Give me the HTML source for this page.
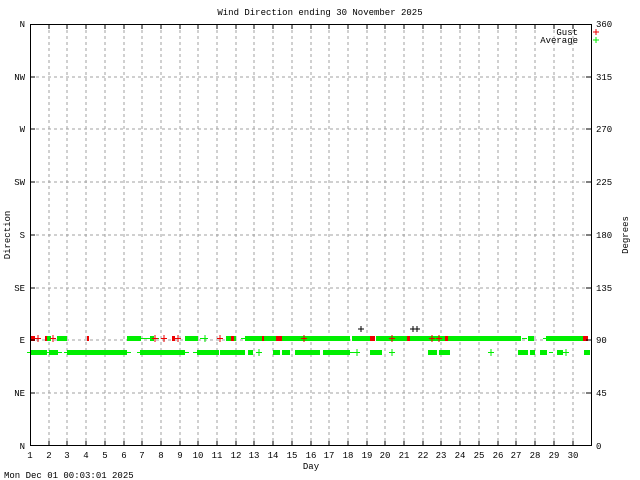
<!DOCTYPE html>
<html><head><meta charset="utf-8"><style>
html,body{margin:0;padding:0;background:#fff;width:640px;height:480px;overflow:hidden}
svg text{font-family:"Liberation Mono","DejaVu Sans Mono",monospace;font-size:9px;fill:#000}
</style></head><body>
<svg width="640" height="480" xmlns="http://www.w3.org/2000/svg" shape-rendering="crispEdges">
<rect width="640" height="480" fill="#fff"/>
<g stroke="#a0a0a0" stroke-width="1" stroke-dasharray="3,3">
<line x1="49" y1="24" x2="49" y2="446"/><line x1="67" y1="24" x2="67" y2="446"/><line x1="86" y1="24" x2="86" y2="446"/><line x1="105" y1="24" x2="105" y2="446"/><line x1="124" y1="24" x2="124" y2="446"/><line x1="142" y1="24" x2="142" y2="446"/><line x1="161" y1="24" x2="161" y2="446"/><line x1="180" y1="24" x2="180" y2="446"/><line x1="198" y1="24" x2="198" y2="446"/><line x1="217" y1="24" x2="217" y2="446"/><line x1="236" y1="24" x2="236" y2="446"/><line x1="254" y1="24" x2="254" y2="446"/><line x1="273" y1="24" x2="273" y2="446"/><line x1="292" y1="24" x2="292" y2="446"/><line x1="311" y1="24" x2="311" y2="446"/><line x1="329" y1="24" x2="329" y2="446"/><line x1="348" y1="24" x2="348" y2="446"/><line x1="367" y1="24" x2="367" y2="446"/><line x1="385" y1="24" x2="385" y2="446"/><line x1="404" y1="24" x2="404" y2="446"/><line x1="423" y1="24" x2="423" y2="446"/><line x1="441" y1="24" x2="441" y2="446"/><line x1="460" y1="24" x2="460" y2="446"/><line x1="479" y1="24" x2="479" y2="446"/><line x1="498" y1="24" x2="498" y2="446"/><line x1="516" y1="24" x2="516" y2="446"/><line x1="535" y1="24" x2="535" y2="446"/><line x1="554" y1="24" x2="554" y2="446"/><line x1="573" y1="24" x2="573" y2="446"/>
<line x1="30" y1="77" x2="591" y2="77"/><line x1="30" y1="129" x2="591" y2="129"/><line x1="30" y1="182" x2="591" y2="182"/><line x1="30" y1="235" x2="591" y2="235"/><line x1="30" y1="288" x2="591" y2="288"/><line x1="30" y1="340" x2="591" y2="340"/><line x1="30" y1="393" x2="591" y2="393"/>
</g>
<g fill="#00ee00">
<rect x="45" y="336" width="6" height="5"/><rect x="57" y="336" width="10" height="5"/><rect x="127" y="336" width="14" height="5"/><rect x="150" y="336" width="4" height="5"/><rect x="185" y="336" width="13" height="5"/><rect x="245" y="336" width="105" height="5"/><rect x="352" y="336" width="18" height="5"/><rect x="376" y="336" width="26" height="5"/><rect x="395" y="336" width="126" height="5"/><rect x="528" y="336" width="6" height="5"/><rect x="546" y="336" width="40" height="5"/><rect x="226" y="336" width="10" height="5"/>
<rect x="31" y="350" width="16" height="5"/><rect x="49" y="350" width="9" height="5"/><rect x="67" y="350" width="60" height="5"/><rect x="140" y="350" width="45" height="5"/><rect x="197" y="350" width="22" height="5"/><rect x="220" y="350" width="25" height="5"/><rect x="248" y="350" width="5" height="5"/><rect x="273" y="350" width="7" height="5"/><rect x="282" y="350" width="8" height="5"/><rect x="295" y="350" width="25" height="5"/><rect x="323" y="350" width="27" height="5"/><rect x="370" y="350" width="12" height="5"/><rect x="428" y="350" width="9" height="5"/><rect x="439" y="350" width="11" height="5"/><rect x="518" y="350" width="10" height="5"/><rect x="530" y="350" width="5" height="5"/><rect x="540" y="350" width="7" height="5"/><rect x="557" y="350" width="6" height="5"/><rect x="584" y="350" width="6" height="5"/>
</g>
<g stroke="#00ee00" fill="none">
<path d="M27 352.5h6M47 352.5h4M58 352.5h4M64 352.5h4M127 352.5h4M137 352.5h4M185 352.5h4M193 352.5h4M259 349v7M256 352.5h6M350 352.5h5M357 349v7M354 352.5h6M392 349v7M389 352.5h6M491 349v7M488 352.5h6M549 352.5h4M566 349v7M563 352.5h6"/>
<path d="M141 338.5h5M154 338.5h5M146 338.5h4M200 338.5h5M205 335v7M202 338.5h6M241 338.5h5M381 338.5h5M471 338.5h0M522 338.5h5M543 338.5h4"/>
</g>
<g stroke="#ee0000" fill="none">
<path d="M38 335v7M35 338.5h6M53 335v7M50 338.5h6M155 335v7M152 338.5h6M164 335v7M161 338.5h6M178 335v7M175 338.5h6M220 335v7M217 338.5h6M304 335v7M301 338.5h6M392 335v7M389 338.5h6M432 335v7M429 338.5h6M439 335v7M436 338.5h6"/>
</g>
<g fill="#ee0000">
<rect x="31" y="336" width="4" height="5"/><rect x="45" y="336" width="2" height="5"/><rect x="87" y="336" width="2" height="5"/><rect x="172" y="336" width="3" height="5"/><rect x="231" y="336" width="3" height="5"/><rect x="262" y="336" width="2" height="5"/><rect x="276" y="336" width="6" height="5"/><rect x="370" y="336" width="5" height="5"/><rect x="407" y="336" width="3" height="5"/><rect x="445" y="336" width="3" height="5"/><rect x="583" y="336" width="5" height="5"/>
</g>
<g stroke="#000" fill="none" stroke-width="1">
<rect x="30.5" y="24.5" width="561" height="421"/>
<path d="M361 326v6M358 329h6M413 326v6M410 329h6M417 326v6M414 329h6" stroke="#000"/>
<path d="M596 29v6M593 32h6" stroke="#ee0000"/>
<path d="M596 37v6M593 40h6" stroke="#00ee00"/>
</g>
<g stroke="#000">
<path d="M30 77h5M30 129h5M30 182h5M30 235h5M30 288h5M30 340h5M30 393h5M586 77h5M586 129h5M586 182h5M586 235h5M586 288h5M586 340h5M586 393h5"/>
<path d="M49 24v5M67 24v5M86 24v5M105 24v5M124 24v5M142 24v5M161 24v5M180 24v5M198 24v5M217 24v5M236 24v5M254 24v5M273 24v5M292 24v5M311 24v5M329 24v5M348 24v5M367 24v5M385 24v5M404 24v5M423 24v5M441 24v5M460 24v5M479 24v5M498 24v5M516 24v5M535 24v5M554 24v5M573 24v5"/>
<path d="M49 441v5M67 441v5M86 441v5M105 441v5M124 441v5M142 441v5M161 441v5M180 441v5M198 441v5M217 441v5M236 441v5M254 441v5M273 441v5M292 441v5M311 441v5M329 441v5M348 441v5M367 441v5M385 441v5M404 441v5M423 441v5M441 441v5M460 441v5M479 441v5M498 441v5M516 441v5M535 441v5M554 441v5M573 441v5"/>
</g>
<text x="320" y="15" text-anchor="middle">Wind Direction ending 30 November 2025</text>
<g text-anchor="end">
<text x="25" y="27">N</text><text x="25" y="80">NW</text><text x="25" y="132">W</text><text x="25" y="185">SW</text><text x="25" y="238">S</text><text x="25" y="291">SE</text><text x="25" y="343">E</text><text x="25" y="396">NE</text><text x="25" y="449">N</text>
<text x="578" y="35">Gust</text><text x="578" y="43">Average</text>
</g>
<g>
<text x="596" y="27">360</text><text x="596" y="80">315</text><text x="596" y="132">270</text><text x="596" y="185">225</text><text x="596" y="238">180</text><text x="596" y="291">135</text><text x="596" y="343">90</text><text x="596" y="396">45</text><text x="596" y="449">0</text>
</g>
<g text-anchor="middle">
<text x="30" y="458">1</text><text x="49" y="458">2</text><text x="67" y="458">3</text><text x="86" y="458">4</text><text x="105" y="458">5</text><text x="124" y="458">6</text><text x="142" y="458">7</text><text x="161" y="458">8</text><text x="180" y="458">9</text><text x="198" y="458">10</text><text x="217" y="458">11</text><text x="236" y="458">12</text><text x="254" y="458">13</text><text x="273" y="458">14</text><text x="292" y="458">15</text><text x="311" y="458">16</text><text x="329" y="458">17</text><text x="348" y="458">18</text><text x="367" y="458">19</text><text x="385" y="458">20</text><text x="404" y="458">21</text><text x="423" y="458">22</text><text x="441" y="458">23</text><text x="460" y="458">24</text><text x="479" y="458">25</text><text x="498" y="458">26</text><text x="516" y="458">27</text><text x="535" y="458">28</text><text x="554" y="458">29</text><text x="573" y="458">30</text>
<text x="311" y="469">Day</text>
</g>
<text x="10" y="235" text-anchor="middle" transform="rotate(-90 10 235)">Direction</text>
<text x="628" y="235" text-anchor="middle" transform="rotate(-90 628 235)">Degrees</text>
<text x="4" y="478">Mon Dec 01 00:03:01 2025</text>
</svg>
</body></html>
